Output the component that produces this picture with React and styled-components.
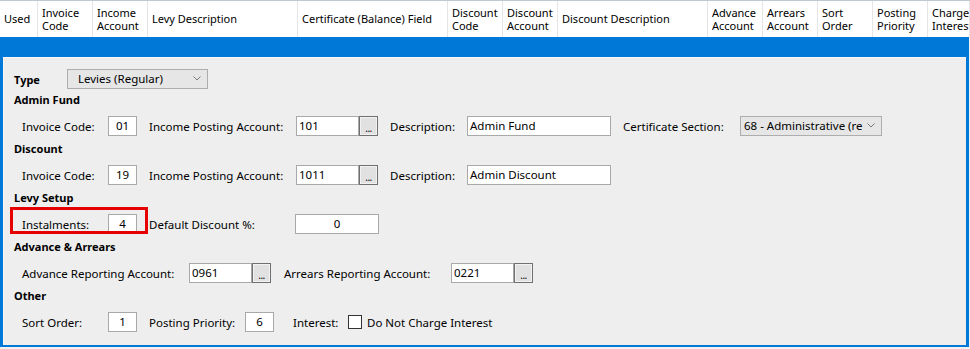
import React from "react";
import styled, { createGlobalStyle } from "styled-components";

const GlobalStyle = createGlobalStyle`
    body {
        margin: 0;
        background: #f0f0f0;
        font-family: "Noto Sans", "Open Sans", sans-serif;
        font-size: 11px;
        color: #000;
    }
`

const GridHeader = styled.div`
    display: flex;
    height: 36px;
    background: #fff;
    border-top: 1px solid #bfc9d3;
    overflow: hidden;
`
const HeaderCell = styled.div`
    box-sizing: border-box;
    flex: ${p => p.$w ? `0 0 ${p.$w}px` : "1 1 auto"};
    min-width: 0;
    display: flex;
    align-items: center;
    padding: 1px 0 0 4px;
    border-right: 1px solid #e5e5e5;
    line-height: 12.5px;
    white-space: pre;
    overflow: hidden;
`

const DetailPanel = styled.div`
    width: 969px;
    box-sizing: border-box;
    background: #0078d7;
    padding: 20px 3px 2px 3px;
`
const FormArea = styled.div`
    height: 288px;
    box-sizing: border-box;
    background: #eeeeee;
    border-top: 1px solid #f7f7f7;
    border-left: 1px solid #f7f7f7;
    padding: 11px 0 0 10px;
    font-size: 11.5px;
`
const TypeRow = styled.div`
    display: flex;
    align-items: center;
    height: 20px;
`
const Heading = styled.div`
    height: 18px;
    line-height: 18px;
    margin-top: ${p => p.$first ? 2 : 4}px;
    font-weight: bold;
    font-size: 11px;
`
const FieldRow = styled.div`
    position: relative;
    display: flex;
    align-items: center;
    gap: 12px;
    height: 20px;
    margin: 7px 0 0 8px;
`
const Field = styled.div`
    display: flex;
    align-items: center;
    margin-left: ${p => p.$offset || 0}px;
`
const Label = styled.span`
    width: ${p => p.$w}px;
    flex: none;
    white-space: nowrap;
    font-weight: ${p => p.$bold ? "bold" : "normal"};
    font-size: ${p => p.$bold ? "11px" : "inherit"};
`
const TextBox = styled.div`
    box-sizing: border-box;
    width: ${p => p.$w}px;
    height: 20px;
    background: #fff;
    border: 1px solid #a9a9a9;
    display: flex;
    align-items: center;
    justify-content: ${p => p.$center ? "center" : "flex-start"};
    padding: 0 2px;
    padding-bottom: 2px;
    white-space: nowrap;
`
const BrowseButton = styled.div`
    box-sizing: border-box;
    width: 19px;
    height: 20px;
    background: #e1e1e1;
    border: 1px solid #707070;
    box-shadow: inset 0 0 0 1px #f2f2f2;
    display: flex;
    align-items: flex-end;
    justify-content: center;
    font-size: 10px;
    line-height: 14px;
    letter-spacing: -0.5px;
`
const DropDown = styled.div`
    box-sizing: border-box;
    width: ${p => p.$w}px;
    height: 20px;
    background: #e6e6e6;
    border: 1px solid #adadad;
    display: flex;
    align-items: center;
    justify-content: space-between;
    padding: 0 6px 1px ${p => p.$pad}px;
    white-space: nowrap;
    overflow: hidden;
`
const CheckBox = styled.div`
    box-sizing: border-box;
    width: 14px;
    height: 14px;
    background: #fff;
    border: 1px solid #333;
    margin-right: 5px;
`
const Highlight = styled.div`
    position: absolute;
    left: -12px;
    top: -7px;
    width: 138px;
    height: 27px;
    box-sizing: border-box;
    border: 3px solid #e60000;
    pointer-events: none;
`

const Chevron = () => (
    <svg width="8" height="5" viewBox="0 0 8 5">
        <polyline points="0.5,0.5 4,4 7.5,0.5" fill="none" stroke="#7a7a7a" strokeWidth="1" />
    </svg>
)

const columns = [
    ["Used", 38], ["Invoice\nCode", 55], ["Income\nAccount", 55], ["Levy Description", 150],
    ["Certificate (Balance) Field", 150], ["Discount\nCode", 55], ["Discount\nAccount", 55],
    ["Discount Description", 150], ["Advance\nAccount", 55], ["Arrears\nAccount", 55],
    ["Sort\nOrder", 55], ["Posting\nPriority", 55], ["Charge\nInterest", 0],
];

const Lookup = ({ value }) => (
    <Field>
        <TextBox $w={63}>{value}</TextBox>
        <BrowseButton>...</BrowseButton>
    </Field>
);

const App = () => {
    return (
        <div>
            <GlobalStyle />
            <GridHeader>
                {columns.map(([title, w]) => (
                    <HeaderCell key={title} $w={w}>{title}</HeaderCell>
                ))}
            </GridHeader>
            <DetailPanel>
                <FormArea>
                    <TypeRow>
                        <Label $w={53} $bold>Type</Label>
                        <DropDown $w={141} $pad={10}>
                            <span>Levies (Regular)</span>
                            <Chevron />
                        </DropDown>
                    </TypeRow>

                    <Heading $first>Admin Fund</Heading>
                    <FieldRow>
                        <Field><Label $w={86}>Invoice Code:</Label><TextBox $w={29} $center>01</TextBox></Field>
                        <Field><Label $w={147}>Income Posting Account:</Label><Lookup value="101" /></Field>
                        <Field><Label $w={77}>Description:</Label><TextBox $w={144}>Admin Fund</TextBox></Field>
                        <Field>
                            <Label $w={117}>Certificate Section:</Label>
                            <DropDown $w={142} $pad={3}>
                                <span>68 - Administrative (re</span>
                                <Chevron />
                            </DropDown>
                        </Field>
                    </FieldRow>

                    <Heading>Discount</Heading>
                    <FieldRow>
                        <Field><Label $w={86}>Invoice Code:</Label><TextBox $w={29} $center>19</TextBox></Field>
                        <Field><Label $w={147}>Income Posting Account:</Label><Lookup value="1011" /></Field>
                        <Field><Label $w={77}>Description:</Label><TextBox $w={144}>Admin Discount</TextBox></Field>
                    </FieldRow>

                    <Heading>Levy Setup</Heading>
                    <FieldRow>
                        <Highlight />
                        <Field><Label $w={86}>Instalments:</Label><TextBox $w={29} $center>4</TextBox></Field>
                        <Field><Label $w={146}>Default Discount %:</Label><TextBox $w={84} $center>0</TextBox></Field>
                    </FieldRow>

                    <Heading>Advance &amp; Arrears</Heading>
                    <FieldRow>
                        <Field><Label $w={167}>Advance Reporting Account:</Label><Lookup value="0961" /></Field>
                        <Field $offset={1}><Label $w={167}>Arrears Reporting Account:</Label><Lookup value="0221" /></Field>
                    </FieldRow>

                    <Heading>Other</Heading>
                    <FieldRow>
                        <Field><Label $w={86}>Sort Order:</Label><TextBox $w={29} $center>1</TextBox></Field>
                        <Field><Label $w={96}>Posting Priority:</Label><TextBox $w={29} $center>6</TextBox></Field>
                        <Field $offset={7}>
                            <Label $w={55}>Interest:</Label>
                            <CheckBox />
                            <span>Do Not Charge Interest</span>
                        </Field>
                    </FieldRow>
                </FormArea>
            </DetailPanel>
        </div>
    );
};

export default App;
